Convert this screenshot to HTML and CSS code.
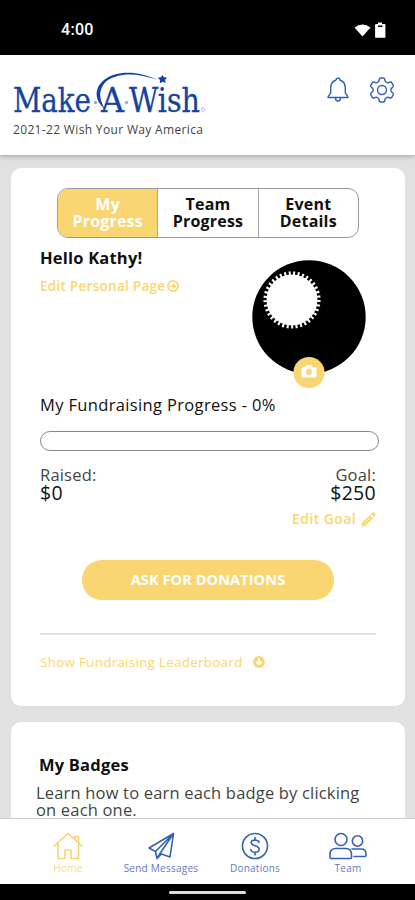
FILE: index.html
```html
<!DOCTYPE html>
<html lang="en">
<head>
<meta charset="utf-8">
<title>Make-A-Wish</title>
<link rel="stylesheet" href="styles.css">
</head>
<body>
<div class="phone">
  <div class="status">
    <span class="time">4:00</span>
    <svg class="status-icons" width="34" height="18" viewBox="0 0 34 18" fill="#fff">
      <path d="M0.5 5.5Q8.500 -.5 16.500 5.500L8.500 14.500Z"/>
      <path d="M24 2V.5h4V2h2.500q.9 0 .9.900v12q0 .900-.9.900h-8.500q-.9 0-.9-.9v-12q0-.9.900-.9z"/>
      <path d="M24 3.500h4.500v1.500H24z" fill="#000"/>
    </svg>
  </div>
  <header class="header">
    <div class="brand">
      <svg class="logo" width="196" height="50" viewBox="0 0 196 50">
        <g class="wordmark">
          <text x="0" y="41.500" textLength="78" lengthAdjust="spacingAndGlyphs">Make</text>
          <text x="88" y="41.500" textLength="23" lengthAdjust="spacingAndGlyphs">A</text>
          <text x="116" y="41.500" textLength="71" lengthAdjust="spacingAndGlyphs">Wish</text>
        </g>
        <path class="swoosh" d="M92 39C81 31 81 18 91 10C104 -.5 126 1 145 10C124 3 106 2 93 11.500C86 18.500 85 28 92 39Z"/>
        <path class="swoosh" d="M149.500 5l1.300 2.300 3.200.2-2 2.500.8 3-3-1.200-3 1.500.3-3.400-2.400-2.100 3.200-.6z"/>
        <circle cx="82.500" cy="32.500" r="1.700" fill="#9aabd9"/>
        <circle cx="113.500" cy="32.500" r="1.700" fill="#9aabd9"/>
        <circle cx="190" cy="39.500" r="1.700" fill="none" stroke="#a9b7df" stroke-width=".9"/>
      </svg>
      <div class="campaign">2021-22 Wish Your Way America</div>
    </div>
    <div class="actions">
      <svg width="24" height="28" viewBox="0 0 24 28">
        <path d="M10 4.200a2 2 0 0 1 4 0C18 5.200 19.300 8 19.300 12v4.500c0 2 2.700 2.500 2.700 5H2c0-2.500 2.700-3 2.700-5V12c0-4 1.300-6.800 5.300-7.800M9.500 22c0 4 5 4 5 0"/>
      </svg>
      <svg width="28" height="28" viewBox="0 0 28 28">
        <path d="M12.500 2h3q1 0 1.200 1l.6 2.500 2.300 1.300 2.600-.8q1-.3 1.500.6l1.500 2.500q.5.900-.2 1.600l-2 2v2.600l2 2q.7.700.2 1.600l-1.500 2.500q-.5.900-1.500.6l-2.600-.8-2.300 1.300-.6 2.500q-.2 1-1.200 1h-3q-1 0-1.200-1l-.6-2.500-2.300-1.300-2.600.8q-1 .3-1.500-.6l-1.500-2.500q-.5-.9.200-1.600l2-2v-2.600l-2-2q-.7-.7-.2-1.600l1.500-2.500q.5-.9 1.500-.6l2.600.8 2.300-1.300.6-2.500q.2-1 1.200-1z"/>
        <circle cx="14" cy="14" r="4.500"/>
      </svg>
    </div>
  </header>
  <main class="content">
    <section class="card progress-card">
      <div class="tabs">
        <div class="tab active">My<br>Progress</div>
        <div class="tab">Team<br>Progress</div>
        <div class="tab">Event<br>Details</div>
      </div>
      <div class="profile">
        <div>
          <h2 class="hello">Hello Kathy!</h2>
          <div class="edit-page">Edit Personal Page
            <svg width="12" height="12" viewBox="0 0 12 12" fill="none" stroke="#f9d671" stroke-width="1.700"><circle cx="6" cy="6" r="5.100"/><path d="M2.500 6h5.500M5.700 3.400L8.300 6 5.700 8.600"/></svg>
          </div>
        </div>
        <svg class="avatar" width="116" height="130" viewBox="0 0 116 130">
          <circle cx="58" cy="58" r="56.700"/>
          <circle cx="41" cy="41" r="25.500" fill="#fff"/>
          <circle cx="41" cy="41" r="26.600" fill="none" stroke="#fff" stroke-width="4" pathLength="74" stroke-dasharray=".9 1.100"/>
          <circle cx="58" cy="113.500" r="15.600" fill="#f9d671"/>
          <path d="M52 108h2.500l1-2h5l1 2H64q1.500 0 1.500 1.500v7.500q0 1.500-1.500 1.500H52q-1.500 0-1.500-1.500v-7.500q0-1.500 1.500-1.500z" fill="#fff"/>
          <circle cx="58" cy="113" r="2.900" fill="#f9d671"/>
        </svg>
      </div>
      <div class="progress-title">My Fundraising Progress - 0%</div>
      <div class="bar"></div>
      <div class="totals">
        <div class="total"><span>Raised:</span><b>$0</b></div>
        <div class="total right"><span>Goal:</span><b>$250</b></div>
      </div>
      <div class="edit-goal">Edit Goal
        <svg width="15" height="15" viewBox="0 0 15 15" fill="#f9d671"><path d="M1 10.500L9 3l3.200 3.200L4.500 13.500.500 14.500zM10 2l1.500-1.400q.7-.5 1.300 0l1.600 1.600q.5.700 0 1.300L13 5z"/><path d="M3.500 11l6-5.700" stroke="#fff" stroke-width=".7"/></svg>
      </div>
      <div class="ask">ASK FOR DONATIONS</div>
      <div class="leaderboard">
        <span>Show Fundraising Leaderboard</span>
        <svg width="12" height="12" viewBox="0 0 12 12"><circle cx="6" cy="6" r="5.900" fill="#f9d671"/><path d="M6 2.800v5M3.500 5.700L6 8.200l2.500-2.500" fill="none" stroke="#fff" stroke-width="2"/></svg>
      </div>
    </section>
    <section class="card badges-card">
      <h2 class="badges-title">My Badges</h2>
      <p class="badges-text">Learn how to earn each badge by clicking<br>on each one.</p>
    </section>
  </main>
  <nav class="nav">
    <div class="nav-item home">
      <svg width="32" height="28" viewBox="0 0 32 28"><path d="M2 14L16 1.500 30 14M6 11v15.500h7V18h6v8.500h7.500V11M23 7V4.500h3.500V10"/></svg>
      <span>Home</span>
    </div>
    <div class="nav-item send">
      <svg width="28" height="28" viewBox="0 0 28 28"><path d="M26.500 1.500L2 16l6.500 3.500 1.500 7 4.500-4.500 8.500 3zM26.500 1.500l-18 18M26.500 1.500L13 21.500l-3 5"/></svg>
      <span>Send Messages</span>
    </div>
    <div class="nav-item donate">
      <svg width="28" height="28" viewBox="0 0 28 28"><circle cx="14" cy="14" r="12.500"/><path d="M18 10.500c-.4-3.300-7.800-3.500-7.800 0 0 4.300 8 2.400 8 7 0 3.800-8 3.500-8.400 0M14 5.500v3M14 20v3"/></svg>
      <span>Donations</span>
    </div>
    <div class="nav-item team">
      <svg width="40" height="28" viewBox="0 0 40 28"><circle cx="13" cy="7.500" r="6"/><circle cx="29.500" cy="9" r="5.200"/><path d="M2 25.500v-3c0-4.500 3-6 6-6h9.500c3.500 0 6 2 6 6v3q0 1-1 1H3q-1 0-1-1zM24 17h9c3 0 5 2 5 5v1.500q0 1-1 1H26"/></svg>
      <span>Team</span>
    </div>
  </nav>
  <div class="gesture"><i></i></div>
</div>
</body>
</html>
```
FILE: styles.css
```css
* { box-sizing: border-box; }
body { margin: 0; font-family: "Open Sans", sans-serif; color: #111; }
.phone { width: 415px; height: 900px; display: flex; flex-direction: column; overflow: hidden; background: #e1e1e1; }
svg { display: block; flex: none; }

.status { height: 55px; flex: none; background: #000; color: #fff; display: flex; justify-content: space-between; align-items: flex-start; padding: 20px 27px 0 61px; }
.time { font: 500 16px/20px Roboto, sans-serif; letter-spacing: .3px; }
.status-icons { margin-top: 2px; }

.header { height: 100px; flex: none; background: #fff; box-shadow: 0 1px 5px rgba(0,0,0,.3); display: flex; justify-content: space-between; padding: 15px 19px 0 13px; z-index: 1; }
.wordmark { font-family: "DejaVu Serif Condensed", "DejaVu Serif", serif; font-size: 33px; fill: #17439f; stroke: #17439f; stroke-width: .3px; }
.swoosh { fill: #17439f; }
.campaign { font-size: 12px; line-height: 16px; margin-top: 2px; color: #444; white-space: nowrap; letter-spacing: .34px; }
.actions { display: flex; gap: 18px; padding-top: 6px; }
.actions svg { fill: none; stroke: #315fba; stroke-width: 1.400; stroke-linejoin: round; }

.content { flex: 1; min-height: 0; overflow: hidden; display: flex; flex-direction: column; gap: 16px; padding: 13px 10px 0 11px; }
.card { flex: none; background: #fff; border-radius: 10px; }
.progress-card { height: 538px; padding: 20px 26px 0 29px; display: flex; flex-direction: column; }
.tabs { display: flex; width: 302px; height: 50px; margin-left: 17px; border: 1px solid #999; border-radius: 11px; overflow: hidden; flex: none; }
.tab { flex: 1; padding-top: 7px; text-align: center; font-size: 16px; line-height: 17px; font-weight: 700; letter-spacing: .2px; border-left: 1px solid #aaa; }
.tab.active { background: #f9d671; color: #fff; border-left: 0; }
.profile { display: flex; justify-content: space-between; height: 151px; flex: none; padding: 9px 12px 0 0; }
.hello { margin: 0; font-size: 16.500px; line-height: 22px; font-weight: 700; letter-spacing: .2px; }
.edit-page { display: flex; align-items: center; gap: 2px; margin-top: 7px; font-size: 13.500px; line-height: 20px; font-weight: 600; color: #f9d671; letter-spacing: .28px; }
.avatar { margin-top: 12px; }
.progress-title { margin-top: 5px; font-size: 16.500px; line-height: 22px; font-weight: 500; letter-spacing: .35px; white-space: nowrap; }
.bar { width: 339px; height: 20px; margin-top: 15px; border: 1px solid #888; border-radius: 10px; flex: none; }
.totals { display: flex; justify-content: space-between; margin-top: 15px; padding-right: 3px; }
.total { display: flex; flex-direction: column; font-size: 16.500px; line-height: 18px; color: #444; letter-spacing: .2px; }
.total b { font-size: 19.500px; line-height: 18px; font-weight: 500; color: #111; letter-spacing: .3px; }
.right { align-items: flex-end; }
.edit-goal { display: flex; justify-content: flex-end; align-items: center; gap: 5px; padding-right: 3px; margin-top: 7px; font-size: 14px; line-height: 20px; font-weight: 600; color: #f9d671; letter-spacing: .4px; }
.ask { width: 252px; height: 40px; border-radius: 20px; margin: 31px 0 0 42px; flex: none; background: #f9d671; color: #fff; text-align: center; font-size: 14.500px; line-height: 39px; font-weight: 700; letter-spacing: .1px; }
.leaderboard { display: flex; align-items: center; gap: 10px; width: 336px; border-top: 2px solid #e3e3e3; margin-top: 33px; padding-top: 17px; font-size: 13.500px; line-height: 20px; font-weight: 500; color: #f9d671; white-space: nowrap; letter-spacing: .23px; }
.badges-card { height: 200px; padding: 32px 25px 0; }
.badges-title { margin: 0 0 0 3px; font-size: 16.500px; line-height: 22px; font-weight: 700; letter-spacing: .2px; }
.badges-text { margin: 8px 0 0; font-size: 16.500px; line-height: 17px; color: #444; white-space: nowrap; letter-spacing: .18px; }

.nav { height: 66px; flex: none; background: #fff; border-top: 1px solid #ccc; display: grid; grid-template-columns: 92px 94px 94px 92px; padding: 13px 21px 0 22px; }
.nav-item { display: flex; flex-direction: column; align-items: center; gap: 1px; font-size: 10px; line-height: 15px; color: #6478be; white-space: nowrap; letter-spacing: .25px; }
.nav-item svg { fill: none; stroke: #3560b6; stroke-width: 1.600; stroke-linejoin: round; stroke-linecap: round; }
.nav-item.home { color: #f9d98a; }
.nav-item.home svg { stroke: #f9d176; }
.gesture { height: 16px; flex: none; background: #000; display: flex; justify-content: center; padding-top: 7px; }
.gesture i { width: 77px; height: 3px; border-radius: 2px; background: #ddd; }
```
